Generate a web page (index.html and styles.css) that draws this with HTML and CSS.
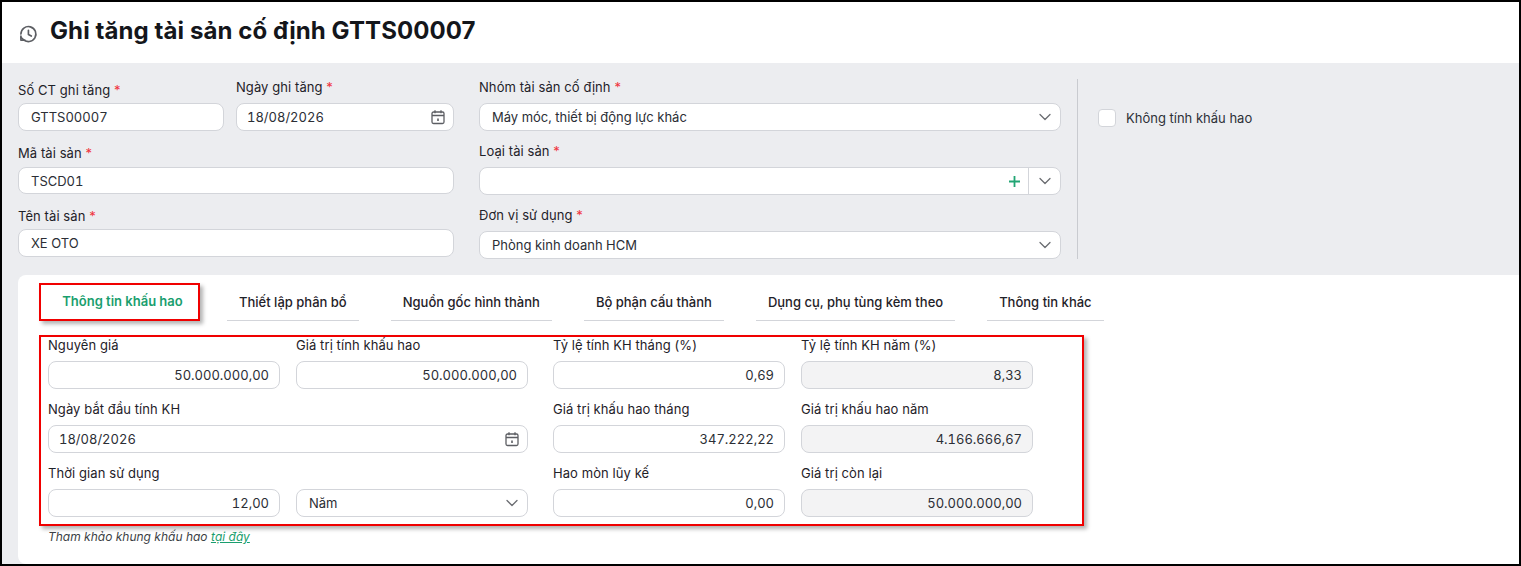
FILE: index.html
```html
<!DOCTYPE html>
<html lang="vi">
<head>
    <meta charset="UTF-8">
    <meta name="viewport" content="width=device-width, initial-scale=1.0">
    <title>Ghi tăng tài sản cố định</title>
    <link rel="stylesheet" href="styles.css">
</head>
<body>
    <div class="frame">
        <div class="header">
            <svg class="history-icon" viewBox="0 0 24 24" fill="none" stroke="currentColor" stroke-width="2" stroke-linecap="round" stroke-linejoin="round">
                <path d="M3.5 12a9 9 0 1 1 2.6 6.4L3.5 16"/>
                <path d="M3.5 14.5v5h5"/>
                <path d="M12.5 7.5v5l3.5 2"/>
            </svg>
            <div class="title">Ghi tăng tài sản cố định GTTS00007</div>
        </div>

        <div class="master-form">
            <div class="master-left">
                <div class="field">
                    <div class="field-label low">Số CT ghi tăng <span class="req">*</span></div>
                    <div class="control">GTTS00007</div>
                </div>
                <div class="field">
                    <div class="field-label">Ngày ghi tăng <span class="req">*</span></div>
                    <div class="control with-icon tight">
                        <span>18/08/2026</span>
                        <svg class="calendar-icon" viewBox="0 0 16 16" fill="none" stroke="currentColor" stroke-width="1.3">
                            <rect x="2" y="3" width="12" height="11.5" rx="1.5"/>
                            <path d="M2 6.5h12M5 1.2v3M11 1.2v3"/>
                            <path d="M8 9.5v2.5" stroke-width="1.6"/>
                        </svg>
                    </div>
                </div>
                <div class="field wide">
                    <div class="field-label shifted">Mã tài sản <span class="req">*</span></div>
                    <div class="control short">TSCD01</div>
                </div>
                <div class="field wide">
                    <div class="field-label shifted close">Tên tài sản <span class="req">*</span></div>
                    <div class="control">XE OTO</div>
                </div>
            </div>

            <div class="master-middle">
                <div class="field">
                    <div class="field-label">Nhóm tài sản cố định <span class="req">*</span></div>
                    <div class="control with-icon">
                        <span>Máy móc, thiết bị động lực khác</span>
                        <svg class="chevron" viewBox="0 0 12 12" fill="none" stroke="currentColor" stroke-width="1.3" stroke-linecap="round" stroke-linejoin="round"><path d="M1 3.5l5 5 5-5"/></svg>
                    </div>
                </div>
                <div class="field">
                    <div class="field-label">Loại tài sản <span class="req">*</span></div>
                    <div class="control combo">
                        <svg class="plus-icon" viewBox="0 0 11 11" fill="none" stroke="currentColor" stroke-width="1.8"><path d="M5.5 0v11M0 5.5h11"/></svg>
                        <div class="combo-arrow">
                            <svg class="chevron" viewBox="0 0 12 12" fill="none" stroke="currentColor" stroke-width="1.3" stroke-linecap="round" stroke-linejoin="round"><path d="M1 3.5l5 5 5-5"/></svg>
                        </div>
                    </div>
                </div>
                <div class="field">
                    <div class="field-label">Đơn vị sử dụng <span class="req">*</span></div>
                    <div class="control with-icon">
                        <span>Phòng kinh doanh HCM</span>
                        <svg class="chevron" viewBox="0 0 12 12" fill="none" stroke="currentColor" stroke-width="1.3" stroke-linecap="round" stroke-linejoin="round"><path d="M1 3.5l5 5 5-5"/></svg>
                    </div>
                </div>
            </div>

            <div class="master-right">
                <div class="checkbox-row">
                    <div class="checkbox"></div>
                    <div>Không tính khấu hao</div>
                </div>
            </div>
        </div>

        <div class="detail-card">
            <div class="tabs">
                <div class="tab active">Thông tin khấu hao</div>
                <div class="tab">Thiết lập phân bổ</div>
                <div class="tab">Nguồn gốc hình thành</div>
                <div class="tab">Bộ phận cấu thành</div>
                <div class="tab">Dụng cụ, phụ tùng kèm theo</div>
                <div class="tab">Thông tin khác</div>
            </div>

            <div class="depreciation">
                <div class="depreciation-group">
                    <div class="field">
                        <div class="field-label">Nguyên giá</div>
                        <div class="control number">50.000.000,00</div>
                    </div>
                    <div class="field">
                        <div class="field-label">Giá trị tính khấu hao</div>
                        <div class="control number">50.000.000,00</div>
                    </div>
                    <div class="field wide">
                        <div class="field-label">Ngày bắt đầu tính KH</div>
                        <div class="control with-icon tight">
                            <span>18/08/2026</span>
                            <svg class="calendar-icon" viewBox="0 0 16 16" fill="none" stroke="currentColor" stroke-width="1.3">
                                <rect x="2" y="3" width="12" height="11.5" rx="1.5"/>
                                <path d="M2 6.5h12M5 1.2v3M11 1.2v3"/>
                                <path d="M8 9.5v2.5" stroke-width="1.6"/>
                            </svg>
                        </div>
                    </div>
                    <div class="field">
                        <div class="field-label">Thời gian sử dụng</div>
                        <div class="control number">12,00</div>
                    </div>
                    <div class="field">
                        <div class="field-label">&nbsp;</div>
                        <div class="control with-icon">
                            <span>Năm</span>
                            <svg class="chevron" viewBox="0 0 12 12" fill="none" stroke="currentColor" stroke-width="1.3" stroke-linecap="round" stroke-linejoin="round"><path d="M1 3.5l5 5 5-5"/></svg>
                        </div>
                    </div>
                </div>

                <div class="depreciation-group">
                    <div class="field">
                        <div class="field-label">Tỷ lệ tính KH tháng (%)</div>
                        <div class="control number">0,69</div>
                    </div>
                    <div class="field">
                        <div class="field-label">Tỷ lệ tính KH năm (%)</div>
                        <div class="control number disabled">8,33</div>
                    </div>
                    <div class="field">
                        <div class="field-label">Giá trị khấu hao tháng</div>
                        <div class="control number">347.222,22</div>
                    </div>
                    <div class="field">
                        <div class="field-label">Giá trị khấu hao năm</div>
                        <div class="control number disabled">4.166.666,67</div>
                    </div>
                    <div class="field">
                        <div class="field-label">Hao mòn lũy kế</div>
                        <div class="control number">0,00</div>
                    </div>
                    <div class="field">
                        <div class="field-label">Giá trị còn lại</div>
                        <div class="control number disabled">50.000.000,00</div>
                    </div>
                </div>
            </div>

            <div class="reference-note">Tham khảo khung khấu hao <a class="reference-link" href="#">tại đây</a></div>
        </div>
    </div>
</body>
</html>
```

FILE: styles.css
```css
:root {
    --page-bg: #ecedf0;
    --border-color: #d3d5da;
    --text-color: #1f2229;
    --green: #1a9e6e;
    --mark-red: #f00000;
}

html, body {
    margin: 0;
    height: 100%;
}

body {
    font-family: Inter, "Noto Sans", sans-serif;
    font-size: 13px;
    color: var(--text-color);
    overflow: hidden;
}

.frame {
    box-sizing: border-box;
    width: 1521px;
    height: 566px;
    border: 2px solid #000;
    background: var(--page-bg);
    overflow: hidden;
}

.header {
    display: flex;
    align-items: center;
    height: 61px;
    padding-left: 16px;
    background: #fff;
}

.history-icon {
    width: 20px;
    height: 20px;
    margin-top: 3px;
    color: #5c5e63;
}

.title {
    margin-left: 12px;
    padding-bottom: 5px;
    font-size: 24px;
    font-weight: 700;
    letter-spacing: 0.09px;
    color: #14161b;
}

.master-form {
    display: flex;
    height: 196px;
    padding: 16px 0 0 16px;
}

.master-left {
    display: grid;
    grid-template-columns: 206px 218px;
    column-gap: 12px;
    row-gap: 12px;
    align-content: start;
    width: 436px;
}

.master-middle {
    display: flex;
    flex-direction: column;
    gap: 12px;
    width: 582px;
    margin-left: 25px;
}

.master-right {
    width: 300px;
    height: 180px;
    margin-left: 16px;
    padding-left: 20px;
    border-left: 1px solid #c9cbd0;
}

.checkbox-row {
    display: flex;
    align-items: center;
    gap: 10px;
    margin-top: 30px;
    color: #2e3138;
}

.checkbox {
    box-sizing: border-box;
    width: 18px;
    height: 18px;
    border: 1px solid var(--border-color);
    border-radius: 4px;
    background: #fff;
}

.field.wide {
    grid-column: span 2;
}

.field-label {
    height: 16px;
    margin-bottom: 8px;
    line-height: 16px;
    letter-spacing: 0.08px;
    white-space: nowrap;
}

.field-label.low {
    height: 19px;
    margin-bottom: 5px;
    line-height: 22px;
}

.field-label.shifted {
    line-height: 20px;
}

.field-label.close {
    margin-bottom: 7px;
}

.req {
    color: #f0323c;
}

.control {
    box-sizing: border-box;
    display: flex;
    align-items: center;
    height: 28px;
    padding: 0 12px;
    border: 1px solid var(--border-color);
    border-radius: 8px;
    background: #fff;
    color: #2b2e35;
    font-variant-numeric: tabular-nums;
    white-space: nowrap;
}

.control.short {
    height: 27px;
}

.control.tight {
    padding-left: 10px;
}

.control.with-icon {
    justify-content: space-between;
}

.control.number {
    justify-content: flex-end;
    padding-right: 10px;
}

.control.disabled {
    background: #f3f3f4;
}

.control.combo {
    justify-content: flex-end;
    padding-right: 0;
}

.combo-arrow {
    display: flex;
    align-items: center;
    justify-content: center;
    width: 31px;
    height: 100%;
    margin-left: 8px;
    border-left: 1px solid var(--border-color);
}

.calendar-icon {
    width: 16px;
    height: 16px;
    margin-right: -5px;
    color: #5c5e63;
}

.chevron {
    width: 12px;
    height: 12px;
    color: #6b6d72;
}

.with-icon .chevron {
    margin-right: -3px;
}

.plus-icon {
    width: 11px;
    height: 11px;
    color: #22a574;
}

.detail-card {
    height: 281px;
    margin-left: 16px;
    padding: 8px 0 0 21px;
    border-radius: 8px 0 0 8px;
    background: #fff;
}

.tabs {
    display: flex;
    align-items: flex-end;
    height: 38px;
}

.tab {
    box-sizing: border-box;
    height: 37px;
    padding: 0 12px;
    margin-left: 32px;
    border-bottom: 1px solid var(--border-color);
    font-weight: 500;
    line-height: 36px;
    white-space: nowrap;
}

.tab.active {
    width: 161px;
    height: 38px;
    padding: 0 0 0 6px;
    margin-left: 0;
    margin-right: -5px;
    border: 2px solid var(--mark-red);
    box-shadow: 3px 3px 4px rgba(0, 0, 0, 0.3);
    color: var(--green);
    font-weight: 600;
    line-height: 33px;
    text-align: center;
}

.depreciation {
    box-sizing: border-box;
    display: flex;
    gap: 25px;
    width: 1045px;
    height: 191px;
    margin-top: 14px;
    padding: 0 0 0 7px;
    border: 2px solid var(--mark-red);
    box-shadow: 3px 3px 4px rgba(0, 0, 0, 0.3);
}

.depreciation-group {
    display: grid;
    grid-template-columns: 232px 232px;
    column-gap: 16px;
    row-gap: 12px;
    align-content: start;
}

.reference-note {
    margin: 3px 0 0 9px;
    font-size: 12px;
    font-style: italic;
    line-height: 16px;
    color: #3c3f45;
}

.reference-link {
    color: var(--green);
}
```
